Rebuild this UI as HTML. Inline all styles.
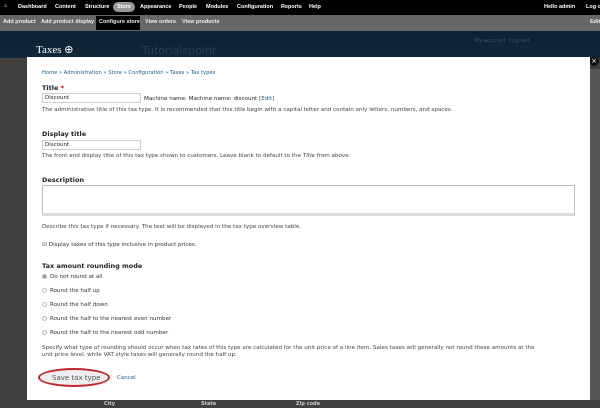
<!DOCTYPE html>
<html><head><style>
*{margin:0;padding:0;box-sizing:border-box}
body{width:600px;height:408px;overflow:hidden;background:#3f3f3f;font-family:"DejaVu Sans","Liberation Sans",sans-serif;position:relative}
.a{position:absolute;white-space:nowrap}
#tb{left:0;top:0;width:600px;height:15px;background:#000;color:#fff;font-size:5.5px;font-weight:bold;font-family:"Liberation Sans",sans-serif}
#sc{left:0;top:15px;width:600px;height:16px;background:#676767;color:#eee;font-size:5.5px;font-weight:bold;font-family:"Liberation Sans",sans-serif}
#hd{left:0;top:31px;width:600px;height:27px;background:linear-gradient(#0d2232,#10263a)}
#dlg{left:27px;top:57px;width:563px;height:343px;background:#fff}
.t{font-size:5.6px;color:#444}
.l{font-size:6.5px;font-weight:bold;color:#222}
.in{border:1px solid #ccc;height:10px;width:99px;font-size:5.5px;padding:1px 2px;color:#222;background:#fff}
.r{width:5px;height:5px;border:1px solid #bbb;border-radius:50%;display:inline-block;vertical-align:middle;margin-right:3px}
</style></head><body>
<div id="tb" class="a">
<span class="a" style="left:4px;top:3px">⌂</span>
<span class="a" style="left:18px;top:4px">Dashboard</span>
<span class="a" style="left:55px;top:4px">Content</span>
<span class="a" style="left:85px;top:4px">Structure</span>
<span class="a" style="left:113px;top:2px;width:22px;height:10px;border-radius:5px;background:#999;"></span>
<span class="a" style="left:117px;top:4px">Store</span>
<span class="a" style="left:140px;top:4px">Appearance</span>
<span class="a" style="left:179px;top:4px">People</span>
<span class="a" style="left:206px;top:4px">Modules</span>
<span class="a" style="left:237px;top:4px">Configuration</span>
<span class="a" style="left:281px;top:4px">Reports</span>
<span class="a" style="left:309px;top:4px">Help</span>
<span class="a" style="left:544px;top:4px">Hello admin</span>
<span class="a" style="left:586px;top:4px">Log o</span>
</div>
<div id="sc" class="a">
<span class="a" style="left:3px;top:4px">Add product</span>
<span class="a" style="left:41px;top:4px">Add product display</span>
<span class="a" style="left:96px;top:1px;width:44px;height:14px;background:#000"></span>
<span class="a" style="left:99px;top:4px">Configure store</span>
<span class="a" style="left:145px;top:4px">View orders</span>
<span class="a" style="left:182px;top:4px">View products</span>
<span class="a" style="left:590px;top:4px">Edit</span>
</div>
<div id="hd" class="a">
<span class="a" style="left:36px;top:12px;color:#fff;font-family:'Liberation Serif',serif;font-size:11px">Taxes ⊕</span>
<span class="a" style="left:142px;top:13px;color:#2c3f4e;font-size:11px">Tutorialspoint</span>
<span class="a" style="left:474px;top:7px;color:#3a5568;font-size:5.5px">My account &nbsp;Log out</span>
</div>
<div class="a" style="left:590px;top:69px;width:10px;height:331px;background:#555"></div>
<div class="a" style="left:589px;top:56px;width:10px;height:10px;border-radius:50%;background:#111;color:#fff;font-size:7px;text-align:center;line-height:10px">×</div>
<div id="dlg" class="a">
<span class="a" style="left:15px;top:13px;font-size:5.2px;color:#1c5d8a">Home » Administration » Store » Configuration » Taxes » Tax types</span>
<span class="a l" style="left:15px;top:27px">Title <span style="color:#c00">*</span></span>
<div class="a in" style="left:15px;top:36px">Discount</div>
<span class="a t" style="left:117px;top:39px;color:#222">Machine name: Machine name: discount <span style="color:#1c5d8a">[Edit]</span></span>
<span class="a t" style="left:15px;top:50px">The administrative title of this tax type. It is recommended that this title begin with a capital letter and contain only letters, numbers, and spaces.</span>
<span class="a l" style="left:15px;top:73px">Display title</span>
<div class="a in" style="left:15px;top:83px">Discount</div>
<span class="a t" style="left:15px;top:96px">The front end display title of this tax type shown to customers. Leave blank to default to the <i>Title</i> from above.</span>
<span class="a l" style="left:15px;top:119px">Description</span>
<div class="a" style="left:15px;top:128px;width:533px;height:31px;border:1px solid #bbb;border-bottom:3px solid #ddd"></div>
<span class="a t" style="left:15px;top:167px">Describe this tax type if necessary. The text will be displayed in the tax type overview table.</span>
<span class="a t" style="left:15px;top:185px;color:#333">☑ Display taxes of this type inclusive in product prices.</span>
<span class="a l" style="left:15px;top:205px">Tax amount rounding mode</span>
<span class="a t" style="left:15px;top:217px;color:#333"><span class="r" style="background:#999"></span>Do not round at all</span>
<span class="a t" style="left:15px;top:231px;color:#333"><span class="r"></span>Round the half up</span>
<span class="a t" style="left:15px;top:245px;color:#333"><span class="r"></span>Round the half down</span>
<span class="a t" style="left:15px;top:259px;color:#333"><span class="r"></span>Round the half to the nearest even number</span>
<span class="a t" style="left:15px;top:273px;color:#333"><span class="r"></span>Round the half to the nearest odd number</span>
<span class="a t" style="left:15px;top:288px">Specify what type of rounding should occur when tax rates of this type are calculated for the unit price of a line item. Sales taxes will generally not round these amounts at the</span>
<span class="a t" style="left:15px;top:295px">unit price level, while VAT style taxes will generally round the half up.</span>
<div class="a" style="left:11px;top:311px;width:72px;height:19px;border:2px solid #c0282e;border-radius:50%;background:#eee"></div>
<span class="a" style="left:25px;top:317px;font-size:7px;color:#555">Save tax type</span>
<span class="a" style="left:90px;top:318px;font-size:5.5px;color:#1c5d8a">Cancel</span>
</div>
<span class="a" style="left:104px;top:401px;font-size:5px;color:#ccc;font-weight:bold">City</span>
<span class="a" style="left:201px;top:401px;font-size:5px;color:#ccc;font-weight:bold">State</span>
<span class="a" style="left:296px;top:401px;font-size:5px;color:#ccc;font-weight:bold">Zip code</span>
</body></html>
